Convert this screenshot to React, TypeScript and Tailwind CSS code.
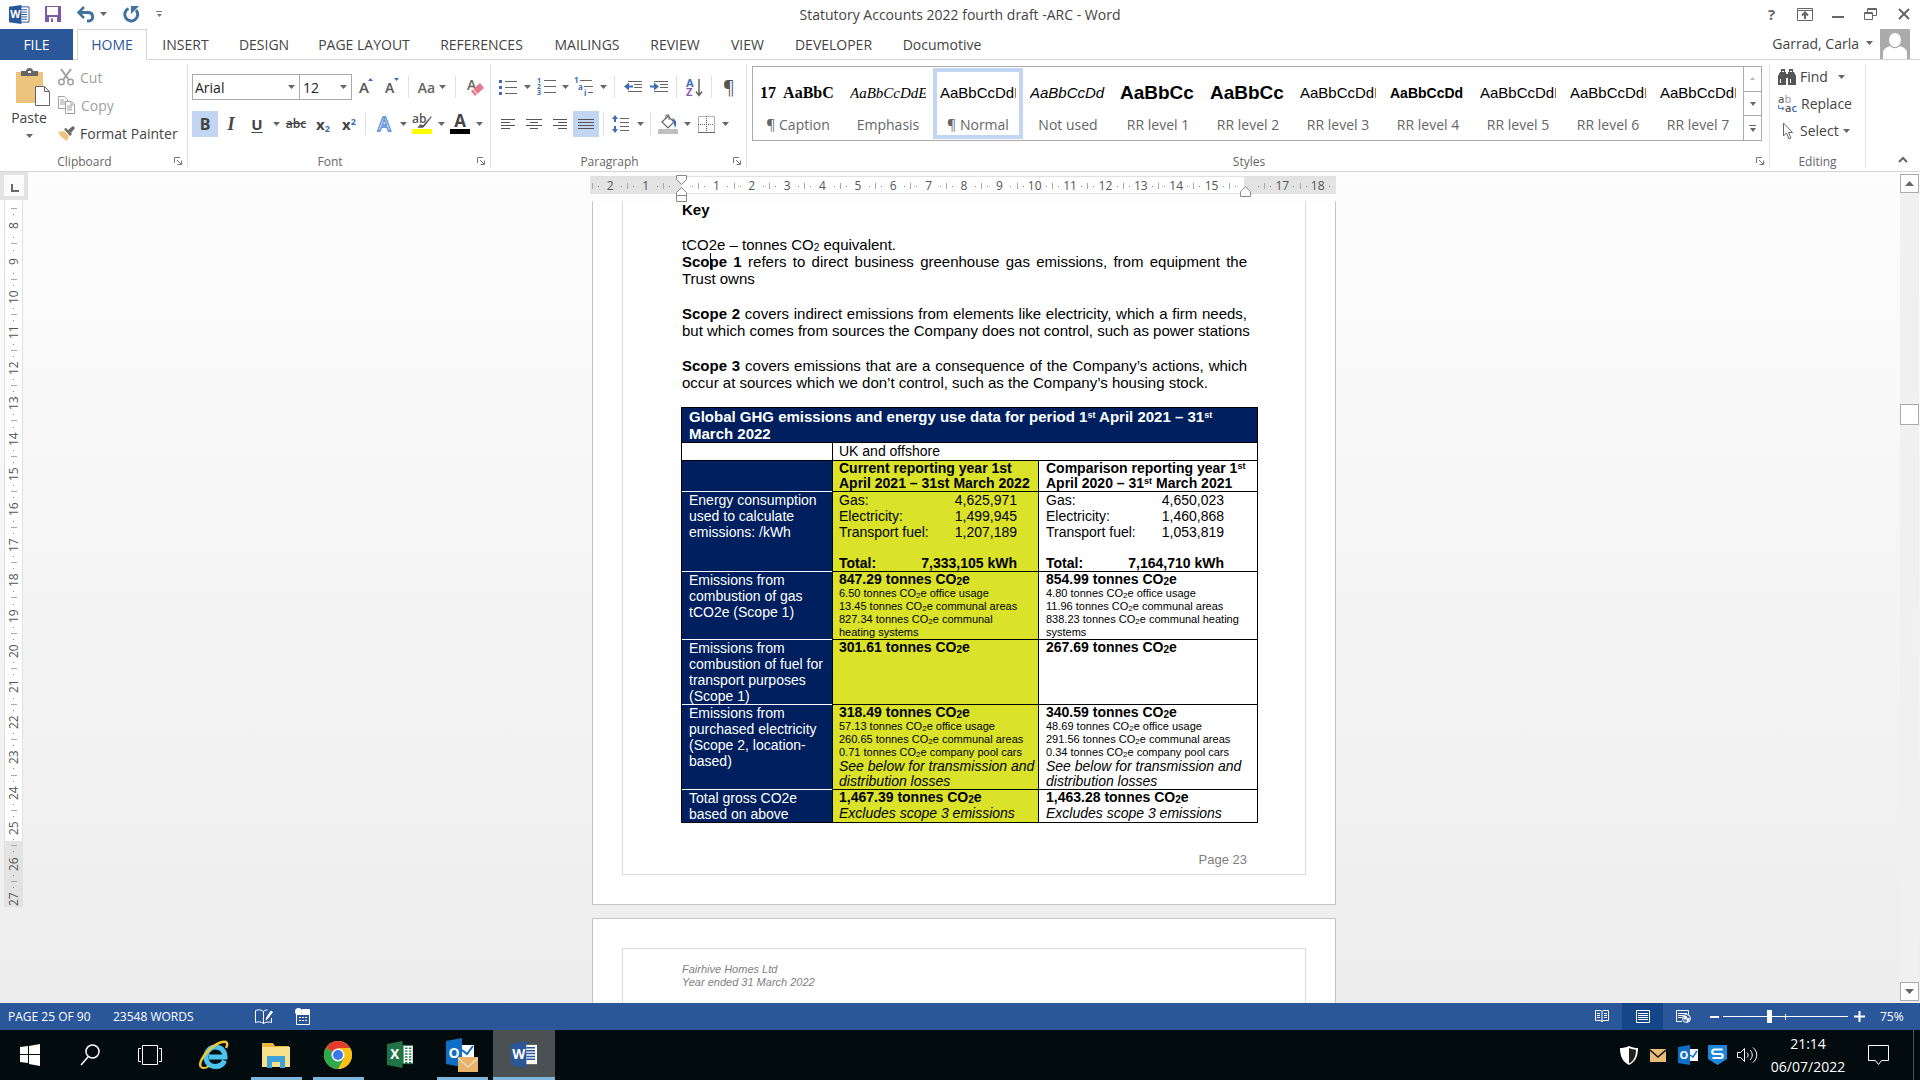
import type { ReactNode } from 'react';

const UI = "font-['Open_Sans','Noto_Sans',sans-serif]";
const ARIAL = "font-['Liberation_Sans',Arial,sans-serif]";

const TABS = [
  { name: 'INSERT', width: 'w-[77px]' },
  { name: 'DESIGN', width: 'w-[80px]' },
  { name: 'PAGE LAYOUT', width: 'w-[120px]' },
  { name: 'REFERENCES', width: 'w-[115px]' },
  { name: 'MAILINGS', width: 'w-[96px]' },
  { name: 'REVIEW', width: 'w-[80px]' },
  { name: 'VIEW', width: 'w-[65px]' },
  { name: 'DEVELOPER', width: 'w-[107px]' },
  { name: 'Documotive', width: 'w-[110px]' },
];

const PLAIN = "font-['Liberation_Sans',Arial,sans-serif] text-[15px]";

const STYLES = [
  { name: '¶ Caption', sample: '17  AaBbC', look: "font-['Liberation_Serif',serif] font-bold text-[16px]" },
  { name: 'Emphasis', sample: 'AaBbCcDdE', look: "font-['Liberation_Serif',serif] italic text-[15px]" },
  { name: '¶ Normal', sample: 'AaBbCcDdE', look: PLAIN, active: true },
  { name: 'Not used', sample: 'AaBbCcDd', look: "font-['Liberation_Sans',Arial,sans-serif] italic text-[15px]" },
  { name: 'RR level 1', sample: 'AaBbCc', look: "font-['Liberation_Sans',Arial,sans-serif] font-bold text-[19px]" },
  { name: 'RR level 2', sample: 'AaBbCc', look: "font-['Liberation_Sans',Arial,sans-serif] font-bold text-[19px]" },
  { name: 'RR level 3', sample: 'AaBbCcDdE', look: PLAIN },
  { name: 'RR level 4', sample: 'AaBbCcDd', look: "font-['Liberation_Sans',Arial,sans-serif] font-bold text-[14px]" },
  { name: 'RR level 5', sample: 'AaBbCcDdE', look: PLAIN },
  { name: 'RR level 6', sample: 'AaBbCcDdE', look: PLAIN },
  { name: 'RR level 7', sample: 'AaBbCcDdE', look: PLAIN },
];

function Caret({ className = 'text-[#666]' }: { className?: string }) {
  return (
    <svg width="7" height="4" viewBox="0 0 7 4" className={`shrink-0 ${className}`}>
      <path d="M0 0h7L3.500 4z" fill="currentColor" />
    </svg>
  );
}

function IconButton({ label, width = 'w-[26px]', active, children }: { label: string; width?: string; active?: boolean; children: ReactNode }) {
  return (
    <button aria-label={label} className={`flex h-[26px] shrink-0 items-center justify-center ${width} ${active ? 'bg-[#c2d5f2]' : ''}`}>
      {children}
    </button>
  );
}

function Drop({ label, width = 'w-3' }: { label: string; width?: string }) {
  return (
    <IconButton label={label} width={width}>
      <Caret />
    </IconButton>
  );
}

function Sep({ className = 'mx-1' }: { className?: string }) {
  return <span className={`h-[22px] w-px shrink-0 bg-[#e1e1e1] ${className}`} />;
}

function Launcher({ label }: { label: string }) {
  return (
    <button aria-label={label} className="absolute right-[5px] bottom-[6px]">
      <svg width="8" height="8" viewBox="0 0 8 8" fill="none" stroke="#777">
        <path d="M.5 6V.5H6M3 3l4 4M7.500 3.500v4h-4" />
      </svg>
    </button>
  );
}

function Group({ name, width, launcher, children }: { name: string; width: string; launcher?: boolean; children: ReactNode }) {
  return (
    <section aria-label={name} className={`relative flex flex-col pt-1 ${width}`}>
      <div className="flex-1">{children}</div>
      <div className={`h-[19px] text-center text-[12px] leading-[20px] text-[#666] ${launcher ? 'pr-[18px]' : ''}`}>{name}</div>
      {launcher && <Launcher label={`${name} settings`} />}
    </section>
  );
}

function GroupLine() {
  return <div className="my-1 w-px shrink-0 bg-[#e1e1e1]" />;
}

function WordLogo({ size = 21 }: { size?: number }) {
  return (
    <svg width={size} height={size} viewBox="0 0 22 22">
      <path d="M12 3h9v16h-9z" fill="#fff" stroke="#2b579a" />
      <path d="M13 6h6M13 8.500h6M13 11h6M13 13.500h6M13 16h6" stroke="#2b579a" />
      <path d="M0 3L13 1v20L0 19z" fill="#2b579a" />
      <text x="6.500" y="15" textAnchor="middle" fontSize="11" fontWeight="700" fill="#fff" fontFamily="Open Sans">W</text>
    </svg>
  );
}

function TitleBar() {
  return (
    <header className="grid h-[29px] grid-cols-[1fr_auto_1fr] items-center pb-px">
      <div className="flex items-center pl-[9px]">
        <WordLogo />
        <button aria-label="Save" className="ml-[14px]">
          <svg width="18" height="18" viewBox="0 0 18 18">
            <path d="M1 1h14l2 0v16H1z" fill="#7b5ba7" />
            <path d="M3 2h11v8H3zM5 12h8v5H5z" fill="#fff" />
            <path d="M7 13.500h2V17H7z" fill="#7b5ba7" />
          </svg>
        </button>
        <button aria-label="Undo" className="ml-[14px]">
          <svg width="20" height="17" viewBox="0 0 20 17" fill="none" stroke="#41719f" strokeWidth="3">
            <path d="M2 6.500h10c6 0 6 8 1 8.500h-2" />
            <path d="M8 1L2.500 6.500 8 12" strokeWidth="2.500" />
          </svg>
        </button>
        <button aria-label="Undo list" className="ml-1">
          <Caret />
        </button>
        <button aria-label="Repeat" className="ml-[15px]">
          <svg width="18" height="18" viewBox="0 0 18 18" fill="none" stroke="#41719f" strokeWidth="3">
            <path d="M14 5A6.500 6.500 0 1 1 6.500 3.500" />
            <path d="M9 9V1h8z" fill="#41719f" stroke="none" />
          </svg>
        </button>
        <button aria-label="Customise toolbar" className="ml-4 flex flex-col items-center gap-[2px]">
          <span className="h-px w-[6px] bg-[#777]" />
          <svg width="5" height="3" viewBox="0 0 5 3"><path d="M0 0h5L2.500 3z" fill="#777" /></svg>
        </button>
      </div>
      <h1 className="text-[14px] text-[#444]">Statutory Accounts 2022 fourth draft -ARC - Word</h1>
      <div className="flex items-center justify-end text-[#666]">
        <button aria-label="Help" className="w-[33px] text-[15px] font-bold">?</button>
        <button aria-label="Ribbon display" className="flex w-[33px] justify-center">
          <svg width="16" height="13" viewBox="0 0 16 13" fill="none" stroke="currentColor">
            <path d="M.5.5h15v12H.5zM0 2.500h16" />
            <path d="M8 11V5M5 7.500l3-3 3 3" strokeWidth="2" />
          </svg>
        </button>
        <button aria-label="Minimise" className="flex w-[33px] justify-center pt-[5px]">
          <span className="h-[2px] w-3 bg-[#666]" />
        </button>
        <button aria-label="Restore" className="flex w-[33px] justify-center">
          <svg width="13" height="12" viewBox="0 0 13 12" fill="none" stroke="currentColor">
            <path d="M.5 4.500h8v7h-8zM.5 5.500h8M3.500 4V.5h9v7H9M3.500 1.500h9" />
          </svg>
        </button>
        <button aria-label="Close" className="flex w-[33px] justify-center">
          <svg width="12" height="12" viewBox="0 0 12 12" stroke="currentColor" strokeWidth="2">
            <path d="M1 1l10 10M11 1L1 11" />
          </svg>
        </button>
      </div>
    </header>
  );
}

function TabRow() {
  return (
    <nav className="flex h-[31px] border-b border-[#d4d4d4] text-[14px] text-[#444]">
      <button className="mr-1 h-[31px] w-[73px] shrink-0 bg-[#2a579a] pb-px text-white">FILE</button>
      <button className="h-[31px] w-[70px] shrink-0 border border-b-0 border-[#d4d4d4] bg-white pb-px text-[#2a579a]">HOME</button>
      {TABS.map((tab) => (
        <button key={tab.name} className={`shrink-0 ${tab.width}`}>{tab.name}</button>
      ))}
      <button className="ml-auto flex items-center gap-[7px] pr-[7px] pb-[2px]">
        Garrad, Carla <Caret />
      </button>
      <svg width="30" height="30" viewBox="0 0 30 30" className="mr-[10px] shrink-0">
        <path d="M0 0h30v30H0z" fill="#ababab" />
        <ellipse cx="15" cy="11" rx="6" ry="7" fill="#fff" />
        <path d="M3 30v-6c0-4 4-6 7-7 3 3 7 3 10 0 3 1 7 3 7 7v6z" fill="#fff" />
      </svg>
    </nav>
  );
}

function ClipboardGroup() {
  return (
    <Group name="Clipboard" width="w-[187px]" launcher>
      <div className="flex">
        <button className="flex w-[58px] flex-col items-center pt-1 text-[14px] text-[#444]">
          <svg width="35" height="38" viewBox="0 0 35 38" className="ml-2">
            <path d="M0 4h27v31H0z" fill="#ecc47d" />
            <path d="M5 3h5c0-4 7-4 7 0h5v5H5z" fill="#666" />
            <path d="M12 3h3v2h-3z" fill="#fff" />
            <path d="M19.500 18.500h9l5 5v14h-14z" fill="#fff" stroke="#666" />
            <path d="M28.500 18.500v5h5" fill="none" stroke="#666" />
          </svg>
          <span className="leading-[24px]">Paste</span>
          <span className="pt-1"><Caret /></span>
        </button>
        <div className="flex flex-col text-[14px]">
          <button className="flex h-7 items-center gap-[6px] pb-[2px] text-[#a0a0a0]">
            <svg width="16" height="18" viewBox="0 0 16 18" fill="none" stroke="#a0a0a0" strokeWidth="1.500">
              <path d="M3 1l8 11M13 1L5 12" strokeWidth="2" />
              <circle cx="3.500" cy="14" r="2.700" />
              <circle cx="12.500" cy="14" r="2.700" />
            </svg>
            Cut
          </button>
          <button className="flex h-7 items-center gap-[6px] pb-[2px] text-[#a0a0a0]">
            <svg width="17" height="18" viewBox="0 0 17 18" fill="#fff" stroke="#a0a0a0">
              <path d="M.5.5h6l3 3v9h-9zM2 4h4M2 6h5M2 8h5" />
              <path d="M7.500 5.500h6l3 3v9h-9zM13 6v3h3M9 10h5M9 12h5M9 14h5" />
            </svg>
            Copy
          </button>
          <button className="flex h-7 items-center gap-[5px] pb-[2px] text-[#444]">
            <svg width="17" height="15" viewBox="0 0 17 15">
              <path d="M0 6l6-1 5 5-2 5C5 13 2 10 0 6z" fill="#ecc47d" />
              <path d="M6 3l2-1 6 6-2 2z" fill="#666" />
              <path d="M10 4l5-4 2 2-4 5z" fill="#666" />
            </svg>
            Format Painter
          </button>
        </div>
      </div>
    </Group>
  );
}

function FontGroup() {
  return (
    <Group name="Font" width="w-[302px]" launcher>
      <div className="flex flex-col gap-[11px] pt-[10px] pl-1 text-[#444]">
        <div className="flex items-center">
          <label className="relative flex items-center">
            <select aria-label="Font name" className="h-[26px] w-[108px] appearance-none border border-[#ababab] bg-white px-[2px] text-[14px] text-[#222]">
              <option>Arial</option>
            </select>
            <span className="absolute right-[5px]"><Caret /></span>
          </label>
          <label className="relative flex items-center">
            <select aria-label="Font size" className="h-[26px] w-[52px] appearance-none border border-l-0 border-[#ababab] bg-white px-[3px] text-[14px] text-[#222]">
              <option>12</option>
            </select>
            <span className="absolute right-[5px]"><Caret /></span>
          </label>
          <IconButton label="Grow font" width="w-[28px]">
            <svg width="14" height="18" viewBox="0 0 14 18" className="overflow-visible">
              <text x="0" y="15" fontSize="15" fontWeight="600" fill="#555" fontFamily="Open Sans">A</text>
              <path d="M9 3l2.500-3L14 3z" fill="#3e6db5" />
            </svg>
          </IconButton>
          <IconButton label="Shrink font" width="w-[24px]">
            <svg width="14" height="18" viewBox="0 0 14 18" className="overflow-visible">
              <text x="0" y="15" fontSize="14" fontWeight="600" fill="#555" fontFamily="Open Sans">A</text>
              <path d="M9 0h5l-2.500 3z" fill="#3e6db5" />
            </svg>
          </IconButton>
          <Sep className="mr-[7px] ml-1" />
          <IconButton label="Change case" width="w-[32px]">
            <span className="mr-1 text-[14px] font-semibold text-[#666]">Aa</span>
            <Caret />
          </IconButton>
          <Sep className="mx-[7px]" />
          <IconButton label="Clear formatting">
            <svg width="18" height="19" viewBox="0 0 18 19" className="overflow-visible">
              <text x="0" y="12" fontSize="14" fontWeight="600" fill="#666" fontFamily="Open Sans">A</text>
              <path d="M4 13l9-8 4 5-9 8z" fill="#e8788a" />
              <path d="M6 11l4 5" stroke="#fff" />
            </svg>
          </IconButton>
        </div>
        <div className="flex items-center">
          <IconButton label="Bold" active><span className="text-[16px] font-bold">B</span></IconButton>
          <IconButton label="Italic"><span className="font-['Liberation_Serif',serif] text-[18px] font-bold italic">I</span></IconButton>
          <IconButton label="Underline"><span className="text-[15px] font-bold underline underline-offset-2">U</span></IconButton>
          <Drop label="Underline style" />
          <IconButton label="Strikethrough" width="w-[28px]"><span className="text-[12px] font-semibold line-through">abc</span></IconButton>
          <IconButton label="Subscript">
            <span className="text-[15px] leading-none font-bold">x<sub className="text-[9px] text-[#3e6db5]">2</sub></span>
          </IconButton>
          <IconButton label="Superscript">
            <span className="text-[15px] leading-none font-bold">x<sup className="text-[9px] text-[#3e6db5]">2</sup></span>
          </IconButton>
          <Sep className="mr-[5px] ml-[3px]" />
          <IconButton label="Text effects">
            <svg width="18" height="18" viewBox="0 0 18 18" className="overflow-visible">
              <text x="9" y="16" textAnchor="middle" fontSize="20" fontWeight="600" fill="#fff" stroke="#5b8fd6" strokeWidth="1.300" fontFamily="Open Sans">A</text>
            </svg>
          </IconButton>
          <Drop label="Text effects list" />
          <IconButton label="Highlight">
            <svg width="20" height="20" viewBox="0 0 20 20" className="overflow-visible">
              <text x="0" y="9" fontSize="12" fontWeight="600" fill="#555" fontFamily="Open Sans">ab</text>
              <path d="M19 2l-8 9-3-1-3 4 6 0 2-2 7-9z" fill="#555" stroke="#fff" strokeWidth=".5" />
              <path d="M0 15h20v5H0z" fill="#ff0" />
            </svg>
          </IconButton>
          <Drop label="Highlight colours" />
          <IconButton label="Font colour">
            <svg width="20" height="20" viewBox="0 0 20 20" className="overflow-visible">
              <text x="10" y="13" textAnchor="middle" fontSize="17" fontWeight="700" fill="#444" fontFamily="Open Sans">A</text>
              <path d="M0 15h20v5H0z" fill="#000" />
            </svg>
          </IconButton>
          <Drop label="Font colours" />
        </div>
      </div>
    </Group>
  );
}

function AlignIcon({ d }: { d: string }) {
  return (
    <svg width="16" height="12" viewBox="0 0 16 12" stroke="#555">
      <path d={d} />
    </svg>
  );
}

function ParagraphGroup() {
  return (
    <Group name="Paragraph" width="w-[255px]" launcher>
      <div className="flex flex-col gap-[11px] pt-[10px] pl-1 text-[#555]">
        <div className="flex items-center">
          <IconButton label="Bullets">
            <svg width="18" height="17" viewBox="0 0 18 17">
              <path d="M6 2.500h12M6 8.500h12M6 14.500h12" stroke="#666" />
              <path d="M0 1h3v3H0zM0 7h3v3H0zM0 13h3v3H0z" fill="#3e6db5" />
            </svg>
          </IconButton>
          <Drop label="Bullet list" />
          <IconButton label="Numbering">
            <svg width="19" height="18" viewBox="0 0 19 18" className="overflow-visible">
              <path d="M7 2.500h12M7 8.500h12M7 14.500h12" stroke="#666" />
              <g fontSize="7" fontWeight="700" fill="#3e6db5" fontFamily="Open Sans">
                <text x="0" y="5">1</text><text x="0" y="11">2</text><text x="0" y="17">3</text>
              </g>
            </svg>
          </IconButton>
          <Drop label="Number list" />
          <IconButton label="Multilevel list">
            <svg width="20" height="18" viewBox="0 0 20 18" className="overflow-visible">
              <path d="M6 2.500h12M10 8.500h9M14 14.500h5" stroke="#666" />
              <g fontSize="8" fontWeight="700" fill="#3e6db5" fontFamily="Open Sans">
                <text x="0" y="5">1</text><text x="4" y="12">a</text><text x="10" y="18">i</text>
              </g>
            </svg>
          </IconButton>
          <Drop label="Multilevel styles" />
          <Sep className="mx-[5px]" />
          <IconButton label="Decrease indent">
            <svg width="18" height="12" viewBox="0 0 18 12">
              <path d="M4 .5h14M10 3.500h8M10 6.500h8M4 10.500h14" stroke="#666" />
              <path d="M0 5.500L5 1.500v3h4v2H5v3z" fill="#3e6db5" />
            </svg>
          </IconButton>
          <IconButton label="Increase indent">
            <svg width="18" height="12" viewBox="0 0 18 12">
              <path d="M4 .5h14M10 3.500h8M10 6.500h8M4 10.500h14" stroke="#666" />
              <path d="M9 5.500L4 1.500v3H0v2h4v3z" fill="#3e6db5" />
            </svg>
          </IconButton>
          <Sep />
          <IconButton label="Sort">
            <svg width="17" height="19" viewBox="0 0 17 19" fontFamily="Open Sans" fontSize="11" fontWeight="700" className="overflow-visible">
              <text x="0" y="9" fill="#3e6db5">A</text>
              <text x="0" y="18" fill="#8c5aa8">Z</text>
              <path d="M13 1v16M10 13.500l3 4 3-4" fill="none" stroke="#666" strokeWidth="1.500" />
            </svg>
          </IconButton>
          <Sep />
          <IconButton label="Show marks"><span className="text-[18px]">¶</span></IconButton>
        </div>
        <div className="flex items-center">
          <IconButton label="Align left"><AlignIcon d="M1 1.500h14M1 4.500h9M1 7.500h14M1 10.500h9" /></IconButton>
          <IconButton label="Centre"><AlignIcon d="M0 1.500h16M4 4.500h8M0 7.500h16M4 10.500h8" /></IconButton>
          <IconButton label="Align right"><AlignIcon d="M1 1.500h14M6 4.500h9M1 7.500h14M6 10.500h9" /></IconButton>
          <IconButton label="Justify" active><AlignIcon d="M0 1.500h16M0 4.500h16M0 7.500h16M0 10.500h16" /></IconButton>
          <Sep className="mx-1" />
          <IconButton label="Line spacing">
            <svg width="18" height="18" viewBox="0 0 18 18">
              <path d="M8 3.500h9M8 7.500h9M8 11.500h9M8 15.500h9" stroke="#666" />
              <path d="M3 0l3 4H4v3H2V4H0zM3 18l3-4H4v-3H2v3H0z" fill="#3e6db5" />
            </svg>
          </IconButton>
          <Drop label="Line spacing list" />
          <Sep className="mx-1" />
          <IconButton label="Shading">
            <svg width="20" height="20" viewBox="0 0 20 20">
              <path d="M4 8l6-6 6 6-6 6z" fill="#fff" stroke="#666" strokeWidth="1.200" />
              <path d="M8 5V1h3v5" fill="none" stroke="#666" />
              <path d="M14 4c5 2 5 6 3 10-1-3-1-6-3-10z" fill="#3e6db5" />
              <path d="M0 15h20v5H0z" fill="#c0c0c0" />
            </svg>
          </IconButton>
          <Drop label="Shading colours" />
          <IconButton label="Borders">
            <svg width="17" height="17" viewBox="0 0 17 17" fill="none" stroke="#666">
              <path d="M.5.5h16v16H.5zM8.500 0v16M0 8.500h16" strokeDasharray="1 1" />
              <path d="M0 16.500h17" />
            </svg>
          </IconButton>
          <Drop label="Border styles" />
        </div>
      </div>
    </Group>
  );
}

function StylesGroup() {
  return (
    <Group name="Styles" width="flex-1 min-w-0" launcher>
      <div className="mt-[2px] mr-[7px] ml-[5px] flex h-[75px] border border-[#ababab]">
        <div className="flex min-w-0 flex-1 overflow-hidden">
          {STYLES.map((style) => (
            <button
              key={style.name}
              className={`my-px flex w-[90px] shrink-0 flex-col items-center justify-end border-4 ${style.active ? 'border-[#c2d5f2]' : 'border-transparent'}`}
            >
              <span className={`h-[26px] w-[76px] shrink-0 overflow-hidden text-left leading-[26px] whitespace-pre text-black ${style.look}`}>{style.sample}</span>
              <span className="pt-2 text-[14px] leading-[21px] text-[#666]">{style.name}</span>
            </button>
          ))}
        </div>
        <div className="flex w-[18px] flex-col border-l border-[#ababab]">
          <button aria-label="Previous styles" className="flex flex-1 items-center justify-center"><svg width="5" height="3" viewBox="0 0 5 3"><path d="M0 3h5L2.500 0z" fill="#bbb" /></svg></button>
          <button aria-label="Next styles" className="flex flex-1 items-center justify-center border-y border-[#ababab]"><svg width="6" height="4" viewBox="0 0 6 4"><path d="M0 0h6L3 4z" fill="#666" /></svg></button>
          <button aria-label="More styles" className="flex flex-1 flex-col items-center justify-center gap-[2px]">
            <span className="h-px w-[7px] bg-[#666]" />
            <svg width="6" height="4" viewBox="0 0 6 4"><path d="M0 0h6L3 4z" fill="#666" /></svg>
          </button>
        </div>
      </div>
    </Group>
  );
}

function EditingGroup() {
  return (
    <Group name="Editing" width="w-[95px]">
      <div className="flex flex-col pl-2 text-[14px] text-[#444]">
        <button className="flex h-[27px] items-center gap-1 pb-[2px]">
          <svg width="18" height="17" viewBox="0 0 18 17" fill="#555">
            <path d="M3 1h4v3h1v13H0V8l2-4h1zM11 1h4v3h1l2 4v9h-8V4h1z" />
            <path d="M7 6h4v4H7z" />
            <path d="M2 11h1v4H2zM12 11h1v4h-1zM4 3h2v1H4zM12 3h2v1h-2z" fill="#fff" />
          </svg>
          <span className="mr-[6px]">Find</span>
          <Caret />
        </button>
        <button className="flex h-[27px] items-center gap-1 pb-[2px]">
          <svg width="19" height="18" viewBox="0 0 19 18" fontFamily="Open Sans" fontSize="11" fontWeight="600" className="overflow-visible">
            <text x="0" y="8" fill="#666">a<tspan fill="#aaa">b</tspan></text>
            <text x="7" y="17" fill="#555">a<tspan fill="#3e6db5">c</tspan></text>
            <path d="M.7 10v3.500h5M4 11.500l2 2-2 2" fill="none" stroke="#3e6db5" />
          </svg>
          Replace
        </button>
        <button className="flex h-[27px] items-center gap-1 pb-[2px]">
          <svg width="18" height="18" viewBox="0 0 18 18" fill="#fff" stroke="#666">
            <path d="M5.500 1v13l3-3 2.500 6 2-1-2.500-5.500h4z" />
          </svg>
          Select <Caret />
        </button>
      </div>
    </Group>
  );
}

function Ribbon() {
  return (
    <div className="flex h-[112px] border-b border-[#d4d4d4]">
      <ClipboardGroup />
      <GroupLine />
      <FontGroup />
      <GroupLine />
      <ParagraphGroup />
      <GroupLine />
      <StylesGroup />
      <GroupLine />
      <EditingGroup />
      <GroupLine />
      <div className="flex w-[54px] items-end justify-end pr-3 pb-2">
        <button aria-label="Collapse ribbon">
          <svg width="10" height="7" viewBox="0 0 10 7" fill="none" stroke="#666" strokeWidth="2">
            <path d="M1 6l4-4 4 4" />
          </svg>
        </button>
      </div>
    </div>
  );
}

const H_MARKS = Array.from({ length: 21 }, (_, i) => i - 2);
const V_MARKS = Array.from({ length: 20 }, (_, i) => i + 8);

function HorizontalRuler() {
  return (
    <div className="relative flex h-[18px] w-[746px] border-y border-[#e1e1e1] bg-[linear-gradient(90deg,#e3e3e3_91px,#fff_91px,#fff_654px,#e3e3e3_654px)] pt-[2px] pr-px pl-[2px] text-[12px] leading-none text-[#555]">
      {H_MARKS.map((n) => (
        <div key={n} className="flex min-w-0 flex-1 basis-0 items-center justify-between">
          <span className="h-[6px] w-px bg-[#aaa]" />
          <span className="h-px w-px bg-[#888]" />
          <span className="flex w-3 justify-center">{n === 0 || n === 16 ? '' : Math.abs(n)}</span>
          <span className="h-px w-px bg-[#888]" />
          <span />
        </div>
      ))}
      <svg width="11" height="28" viewBox="0 0 11 28" fill="#fff" stroke="#888" className="absolute -top-[2px] left-[86px]">
        <path d="M.5.5h10v4l-5 5-5-5zM5.500 12.500l5 5v3H.5v-3zM.5 20.500h10v6H.5z" />
      </svg>
      <svg width="11" height="11" viewBox="0 0 11 11" fill="#fff" stroke="#888" className="absolute top-[9px] left-[650px]">
        <path d="M5.500.7l5 5v4.800H.5V5.700z" />
      </svg>
    </div>
  );
}

function VerticalRuler() {
  return (
    <div className="w-7 shrink-0">
      <div className="h-7 bg-[#e3e3e3] px-1 py-[3px]">
        <button aria-label="Tab stop" className="flex h-[21px] w-5 items-center justify-center bg-[#fbfbfb]">
          <span className="mt-1 ml-[2px] h-2 w-2 border-b-2 border-l-2 border-[#666]" />
        </button>
      </div>
      <div className="ml-1 h-[707px] w-[19px] overflow-hidden border-x border-[#e1e1e1] bg-[linear-gradient(180deg,#fff_641px,#e3e3e3_641px)] pt-2 text-[12px] leading-none text-[#555]">
        <div className="flex h-[708px] flex-col">
          {V_MARKS.map((n) => (
            <div key={n} className="flex min-h-0 flex-1 basis-0 flex-col items-center justify-between">
              <span className="h-px w-[6px] bg-[#aaa]" />
              <span className="h-px w-px bg-[#888]" />
              <span className="flex h-3 rotate-180 items-center justify-center [writing-mode:vertical-rl]">{n}</span>
              <span className="h-px w-px bg-[#888]" />
              <span />
            </div>
          ))}
        </div>
      </div>
    </div>
  );
}

function FullLine({ children }: { children: ReactNode }) {
  return <span className="block whitespace-nowrap [text-align-last:justify]">{children}</span>;
}

function Sub() {
  return <sub className="-bottom-px text-[10px]">2</sub>;
}

function SmallSub() {
  return <sub className="-bottom-px text-[8px]">2</sub>;
}

function Sup() {
  return <sup className="text-[9px]">st</sup>;
}

function Amount({ label, value }: { label: string; value: string }) {
  return (
    <div className="flex w-[178px] justify-between">
      <span>{label}</span>
      <span>{value}</span>
    </div>
  );
}

function Tonnes({ value }: { value: string }) {
  return <div className="leading-[15px] font-bold">{value} tonnes CO<Sub />e</div>;
}

function Small({ value, what }: { value: string; what: string }) {
  return <div className="text-[11px] leading-[13px]">{value} tonnes CO<SmallSub />e {what}</div>;
}

const LEFT = 'border-x border-t border-x-black border-t-white bg-[#001f5f] pl-[7px] text-left font-normal text-white';
const MID = 'border border-black bg-[#dbe22a] pl-[6px]';
const RIGHT = 'border border-black bg-white pl-[7px]';

function EmissionsTable() {
  return (
    <table className="mt-4 -ml-px w-[577px] table-fixed border-collapse text-[14px] leading-[16px] whitespace-nowrap text-black [&_td]:align-top [&_th]:align-top">
      <colgroup>
        <col className="w-[151px]" />
        <col className="w-[206px]" />
        <col />
      </colgroup>
      <tbody>
        <tr>
          <th colSpan={3} className="border border-black bg-[#001f5f] pl-[7px] text-left text-[15px] leading-[17px] font-bold text-white">
            Global GHG emissions and energy use data for period 1<Sup /> April 2021 – 31<Sup /><br />March 2022
          </th>
        </tr>
        <tr>
          <td className="border border-black" />
          <td colSpan={2} className="border border-black pb-px pl-[6px]">UK and offshore</td>
        </tr>
        <tr className="leading-[15px] font-bold">
          <td className="border-x border-black bg-[#001f5f]" />
          <td className={MID}>Current reporting year 1st<br />April 2021 – 31st March 2022</td>
          <td className={RIGHT}>Comparison reporting year 1<Sup /><br />April 2020 – 31<Sup /> March 2021</td>
        </tr>
        <tr>
          <th className={LEFT}>Energy consumption<br />used to calculate<br />emissions: /kWh</th>
          <td className={MID}>
            <Amount label="Gas:" value="4,625,971" />
            <Amount label="Electricity:" value="1,499,945" />
            <Amount label="Transport fuel:" value="1,207,189" />
            <div className="pt-[15px] font-bold"><Amount label="Total:" value="7,333,105 kWh" /></div>
          </td>
          <td className={RIGHT}>
            <Amount label="Gas:" value="4,650,023" />
            <Amount label="Electricity:" value="1,460,868" />
            <Amount label="Transport fuel:" value="1,053,819" />
            <div className="pt-[15px] font-bold"><Amount label="Total:" value="7,164,710 kWh" /></div>
          </td>
        </tr>
        <tr>
          <th className={LEFT}>Emissions from<br />combustion of gas<br />tCO2e (Scope 1)</th>
          <td className={MID}>
            <Tonnes value="847.29" />
            <Small value="6.50" what="office usage" />
            <Small value="13.45" what="communal areas" />
            <Small value="827.34" what="communal" />
            <div className="text-[11px] leading-[13px]">heating systems</div>
          </td>
          <td className={RIGHT}>
            <Tonnes value="854.99" />
            <Small value="4.80" what="office usage" />
            <Small value="11.96" what="communal areas" />
            <Small value="838.23" what="communal heating" />
            <div className="text-[11px] leading-[13px]">systems</div>
          </td>
        </tr>
        <tr>
          <th className={LEFT}>Emissions from<br />combustion of fuel for<br />transport purposes<br />(Scope 1)</th>
          <td className={MID}><Tonnes value="301.61" /></td>
          <td className={RIGHT}><Tonnes value="267.69" /></td>
        </tr>
        <tr>
          <th className={LEFT}>Emissions from<br />purchased electricity<br />(Scope 2, location-<br />based)</th>
          <td className={MID}>
            <Tonnes value="318.49" />
            <Small value="57.13" what="office usage" />
            <Small value="260.65" what="communal areas" />
            <Small value="0.71" what="company pool cars" />
            <div className="leading-[15px] italic">See below for transmission and<br />distribution losses</div>
          </td>
          <td className={RIGHT}>
            <Tonnes value="340.59" />
            <Small value="48.69" what="office usage" />
            <Small value="291.56" what="communal areas" />
            <Small value="0.34" what="company pool cars" />
            <div className="leading-[15px] italic">See below for transmission and<br />distribution losses</div>
          </td>
        </tr>
        <tr>
          <th className={`border-b border-b-black ${LEFT}`}>Total gross CO2e<br />based on above</th>
          <td className={MID}><Tonnes value="1,467.39" /><i>Excludes scope 3 emissions</i></td>
          <td className={RIGHT}><Tonnes value="1,463.28" /><i>Excludes scope 3 emissions</i></td>
        </tr>
      </tbody>
    </table>
  );
}

function Pages() {
  return (
    <div className={`mt-[7px] ml-[2px] flex min-h-0 w-[744px] flex-1 flex-col overflow-hidden ${ARIAL}`}>
      <article className="shrink-0 border border-t-0 border-[#c6c6c6] bg-white px-[29px] pb-[29px]">
        <div className="border border-t-0 border-[#d9d9d9] pr-[58px] pb-[6px] pl-[59px] text-[15px] leading-[17px] text-black">
          <h2 className="font-bold">Key</h2>
          <p className="pt-[18px]">tCO2e – tonnes CO<Sub /> equivalent.</p>
          <div className="relative">
            <FullLine><b>Scope 1</b> refers to direct business greenhouse gas emissions, from equipment the</FullLine>
            Trust owns
            <span className="absolute top-0 left-7 h-4 w-px bg-black" />
          </div>
          <p className="pt-[18px]">
            <FullLine><b>Scope 2</b> covers indirect emissions from elements like electricity, which a firm needs,</FullLine>
            <FullLine>but which comes from sources the Company does not control, such as power stations</FullLine>
          </p>
          <p className="pt-[18px]">
            <FullLine><b>Scope 3</b> covers emissions that are a consequence of the Company’s actions, which</FullLine>
            occur at sources which we don’t control, such as the Company’s housing stock.
          </p>
          <EmissionsTable />
          <p className="pt-7 text-right text-[13px] text-[#7f7f7f]">Page 23</p>
        </div>
      </article>
      <article className="mt-[13px] flex flex-1 flex-col border border-b-0 border-[#c6c6c6] bg-white px-[29px] pt-[29px]">
        <div className="flex-1 border border-b-0 border-[#d9d9d9] pt-[14px] pl-[59px] text-[11px] leading-[13px] text-[#7f7f7f] italic">
          Fairhive Homes Ltd<br />Year ended 31 March 2022
        </div>
      </article>
    </div>
  );
}

function ScrollBar() {
  return (
    <div className="flex w-5 shrink-0 flex-col pt-[2px] pr-px pb-[2px]">
      <button aria-label="Scroll up" className="flex h-[19px] items-center justify-center border border-[#ababab] bg-white">
        <svg width="9" height="5" viewBox="0 0 9 5"><path d="M0 5h9L4.500 0z" fill="#666" /></svg>
      </button>
      <div className="flex-1 bg-[#f0f0f0] pt-[211px]">
        <div className="h-[21px] border border-[#ababab] bg-white" />
      </div>
      <button aria-label="Scroll down" className="flex h-[19px] items-center justify-center border border-[#ababab] bg-white">
        <svg width="9" height="5" viewBox="0 0 9 5"><path d="M0 0h9L4.500 5z" fill="#666" /></svg>
      </button>
    </div>
  );
}

function StatusBar() {
  return (
    <footer className="flex h-[27px] shrink-0 items-center bg-[#2a579a] text-[12px] text-white">
      <span className="w-[105px] pl-2">PAGE 25 OF 90</span>
      <span className="w-[150px] pl-2">23548 WORDS</span>
      <button aria-label="Proofing">
        <svg width="18" height="16" viewBox="0 0 18 16" fill="none" stroke="#fff">
          <path d="M8.500 2.500C6 .5 3 .5.5 1.500v12c2.500-1 5.500-1 8 1V2.500c1-1 2-1.500 4-1.500M8.500 14.500c2-1.500 5-2 8-1V9" />
          <path d="M11 11l1-3 4-6 1.500 1-4.500 6z" fill="#fff" />
        </svg>
      </button>
      <button aria-label="Macros" className="ml-[22px]">
        <svg width="15" height="17" viewBox="0 0 15 17" fill="none" stroke="#fff">
          <path d="M1.500 6v10.500h13V1.500H7M2 6.500h12M4 9.500h2m1 0h2m1 0h2M4 12.500h2m1 0h2m1 0h2" />
          <circle cx="3.500" cy="3.500" r="3.500" fill="#fff" stroke="none" />
          <path d="M7 2h7v4H7z" fill="#fff" />
        </svg>
      </button>
      <div className="ml-auto flex h-full items-center">
        <button aria-label="Read mode" className="flex h-full w-[41px] items-center justify-center">
          <svg width="14" height="13" viewBox="0 0 14 13" fill="none" stroke="#fff">
            <path d="M.5.5H6L7 1.500 8 .5h5.500v10H8l-1 1.500-1-1.500H.5zM7 1v11M2 3.500h3M2 5.500h3M2 7.500h3M9 3.500h3M9 5.500h3M9 7.500h3" />
          </svg>
        </button>
        <button aria-label="Print layout" className="flex h-full w-[41px] items-center justify-center bg-[#16468a]">
          <svg width="14" height="13" viewBox="0 0 14 13" fill="none" stroke="#fff">
            <path d="M.5.5h13v12H.5zM2 3.500h10M2 5.500h10M2 7.500h10M2 9.500h10" />
          </svg>
        </button>
        <button aria-label="Web layout" className="flex h-full w-[41px] items-center justify-center">
          <svg width="15" height="13" viewBox="0 0 15 13" fill="none" stroke="#fff">
            <path d="M6 11.500H.5V.5h12V5M2 3.500h9M2 5.500h5M2 7.500h4" />
            <circle cx="10.500" cy="8.500" r="4" fill="#2a579a" />
            <path d="M8 6l3 1-1 2-2 0zM11 9l2-1 0 2-2 2z" fill="#fff" />
          </svg>
        </button>
        <button aria-label="Zoom out" className="ml-1 flex h-full w-3 items-center justify-center"><span className="h-[2px] w-[9px] bg-white" /></button>
        <div className="relative mx-[3px] flex h-full w-[125px] items-center">
          <span className="absolute left-[62px] h-[6px] w-px bg-white" />
          <input
            type="range"
            aria-label="Zoom"
            min={0}
            max={120}
            defaultValue={44}
            className="relative h-px w-full appearance-none bg-white [&::-webkit-slider-thumb]:h-[13px] [&::-webkit-slider-thumb]:w-[5px] [&::-webkit-slider-thumb]:appearance-none [&::-webkit-slider-thumb]:bg-white"
          />
        </div>
        <button aria-label="Zoom in" className="flex h-full w-4 items-center justify-center">
          <svg width="11" height="11" viewBox="0 0 11 11"><path d="M4.500 0h2v4.500H11v2H6.500V11h-2V6.500H0v-2h4.500z" fill="#fff" /></svg>
        </button>
        <span className="w-[53px] pl-[13px]">75%</span>
      </div>
    </footer>
  );
}

function TaskButton({ label, state, children }: { label: string; state?: 'open' | 'active'; children: ReactNode }) {
  return (
    <button
      aria-label={label}
      className={`flex h-full w-[62px] flex-col items-center justify-between pt-[3px] ${state === 'active' ? 'bg-[#4a5153]' : ''}`}
    >
      <span className="flex flex-1 items-center">{children}</span>
      <span className={`h-[3px] ${state === 'active' ? 'w-full bg-[#7eb6de]' : state === 'open' ? 'w-[51px] bg-[#7eb6de]' : 'w-0'}`} />
    </button>
  );
}

function OfficeTile({ letter, color, children }: { letter: string; color: string; children?: ReactNode }) {
  return (
    <svg width="26" height="30" viewBox="0 0 27 31">
      <path d="M14 5h13v20H14z" fill={color === '#217346' ? color : '#fff'} />
      {children}
      <path d="M0 4l16-3v28L0 26z" fill={color} />
      <text x="8" y="20" textAnchor="middle" fontSize="14" fontWeight="700" fill="#fff" fontFamily="Open Sans">{letter}</text>
    </svg>
  );
}

function Taskbar() {
  return (
    <footer className="flex h-[50px] shrink-0 items-center bg-[#020b0e] text-white">
      <button aria-label="Start" className="flex w-[60px] justify-center">
        <svg width="20" height="22" viewBox="0 0 20 22" fill="#fff">
          <path d="M0 3l8-1v8H0zM9 2l11-2v10H9zM0 11h8v8l-8-1zM9 11h11v11L9 20z" />
        </svg>
      </button>
      <button aria-label="Search" className="flex w-[60px] justify-center">
        <svg width="20" height="22" viewBox="0 0 20 22" fill="none" stroke="#fff" strokeWidth="1.500">
          <circle cx="12.500" cy="7.500" r="6.500" />
          <path d="M8 13l-7 8" />
        </svg>
      </button>
      <button aria-label="Task view" className="mr-[3px] flex w-[60px] justify-center">
        <svg width="24" height="20" viewBox="0 0 24 20" fill="none" stroke="#fff">
          <path d="M4.500.5h15v19h-15zM3 3.500H.5v13H3M21 3.500h2.500v13H21" />
        </svg>
      </button>
      <TaskButton label="Internet Explorer">
        <svg width="30" height="30" viewBox="0 0 30 30" fill="none">
          <path d="M25.500 20.500c-1.500 4-5 6-9 6-6 0-9.500-4-9.500-9.500S11 7 16.500 7 26 11 26 17H10" stroke="#4cc3f1" strokeWidth="5" />
          <path d="M2 27C-3 20 18-1 27 2c2 1 1 4 0 6" stroke="#f3c631" strokeWidth="2.500" />
          <path d="M2 27c2 2 5 1 8-1" stroke="#f3c631" strokeWidth="2" />
        </svg>
      </TaskButton>
      <TaskButton label="File Explorer" state="open">
        <svg width="28" height="27" viewBox="0 0 28 27">
          <path d="M0 1h11l2 3h14v20H0z" fill="#e9b93d" />
          <path d="M0 5h28v20H0z" fill="#fbe08a" />
          <path d="M5 26V14h18v12h-5v-6h-8v6z" fill="#3fa3d8" />
        </svg>
      </TaskButton>
      <TaskButton label="Chrome" state="open">
        <svg width="28" height="28" viewBox="0 0 28 28">
          <circle cx="14" cy="14" r="14" fill="#fbc116" />
          <path d="M14 14L1.900 7A14 14 0 0 1 26.100 7z" fill="#e33b2e" />
          <path d="M14 14L1.900 7A14 14 0 0 0 14 28l6-10.500z" fill="#2da94f" />
          <path d="M14 7h12.100A14 14 0 0 1 14 28l6-10.500z" fill="#fbc116" />
          <circle cx="14" cy="14" r="6.500" fill="#fff" />
          <circle cx="14" cy="14" r="5" fill="#3c78e8" />
        </svg>
      </TaskButton>
      <TaskButton label="Excel">
        <OfficeTile letter="X" color="#217346">
          <path d="M18 7h8M18 10h8M18 13h8M18 16h8M18 19h8M18 22h8M18 6v18M22 6v18M26 6v18" stroke="#fff" strokeWidth="1.500" />
        </OfficeTile>
      </TaskButton>
      <TaskButton label="Outlook" state="open">
        <svg width="32" height="34" viewBox="0 0 32 34">
          <path d="M14 7h14v16H14z" fill="#fff" />
          <path d="M16 12l5 4 6-8" fill="none" stroke="#0f6fc6" strokeWidth="2" />
          <path d="M0 3l16-3v29L0 26z" fill="#0f6fc6" />
          <text x="8" y="20" textAnchor="middle" fontSize="14" fontWeight="700" fill="#fff" fontFamily="Open Sans">O</text>
          <path d="M12 19h20v15H12z" fill="#eab36a" />
          <path d="M12 20l10 9 10-9" fill="none" stroke="#fff" />
        </svg>
      </TaskButton>
      <TaskButton label="Word" state="active">
        <OfficeTile letter="W" color="#2b579a">
          <path d="M16 8h9M16 11h9M16 14h9M16 17h9M16 20h9" stroke="#2b579a" strokeWidth="1.500" />
        </OfficeTile>
      </TaskButton>
      <div className="ml-auto flex h-full items-center">
        <svg width="18" height="19" viewBox="0 0 18 19">
          <path d="M9 0c3 1.500 6 2 9 2 0 9-3 14-9 17C3 16 0 11 0 2c3 0 6-.5 9-2z" fill="#fff" />
          <path d="M9 2c2.500 1.200 5 1.600 7 1.700C16 10 14 15 9 17.500z" fill="#222" />
        </svg>
        <svg width="16" height="13" viewBox="0 0 16 13" className="ml-3">
          <path d="M0 0h16v13H0z" fill="#e8bd77" />
          <path d="M0 1l8 7 8-7" fill="none" stroke="#111" strokeWidth="1.500" />
        </svg>
        <svg width="20" height="20" viewBox="0 0 20 20" className="ml-3">
          <path d="M10 4h10v12H10z" fill="#fff" />
          <path d="M12 10l3 2 4-6" fill="none" stroke="#0f6fc6" strokeWidth="1.500" />
          <path d="M0 2l12-2v20L0 18z" fill="#0f6fc6" />
          <text x="6" y="14" textAnchor="middle" fontSize="11" fontWeight="700" fill="#fff" fontFamily="Open Sans">O</text>
        </svg>
        <svg width="19" height="20" viewBox="0 0 19 20" className="ml-[10px]">
          <path d="M0 0h19v14l-9.500 6L0 14z" fill="#1c87d8" />
          <path d="M14.500 4.500h-8c-3 0-3 4.500 0 4.500h6c3 0 3 4 0 4h-8" fill="none" stroke="#fff" strokeWidth="2.200" />
        </svg>
        <svg width="21" height="18" viewBox="0 0 21 18" fill="none" stroke="#fff" className="ml-[10px]">
          <path d="M.5 6.500h3l4-4v13l-4-4h-3zM10 6.500c1.500 1.500 1.500 3.500 0 5M13 4c3 3 3 7 0 10M16 1.500c5 4.500 5 10.500 0 15" />
        </svg>
        <div className="ml-1 w-[92px] text-center text-[14px] leading-[23px]">
          <div>21:14</div>
          <div>06/07/2022</div>
        </div>
        <button aria-label="Notifications" className="ml-[14px]">
          <svg width="21" height="21" viewBox="0 0 21 21" fill="none" stroke="#fff">
            <path d="M.5.5h20v15h-7l-3 4-3-4h-7z" />
          </svg>
        </button>
        <span className="mr-[6px] ml-6 h-full w-px bg-[#4a5153]" />
      </div>
    </footer>
  );
}

export default function App() {
  return (
    <div className={`flex h-screen flex-col overflow-hidden bg-white ${UI}`}>
      <TitleBar />
      <TabRow />
      <Ribbon />
      <main className="flex min-h-0 flex-1 overflow-hidden bg-linear-to-b from-[#fdfdfd] to-[#ededed]">
        <VerticalRuler />
        <div className="mx-auto flex w-[748px] flex-col pt-1">
          <HorizontalRuler />
          <Pages />
        </div>
        <ScrollBar />
      </main>
      <StatusBar />
      <Taskbar />
    </div>
  );
}
